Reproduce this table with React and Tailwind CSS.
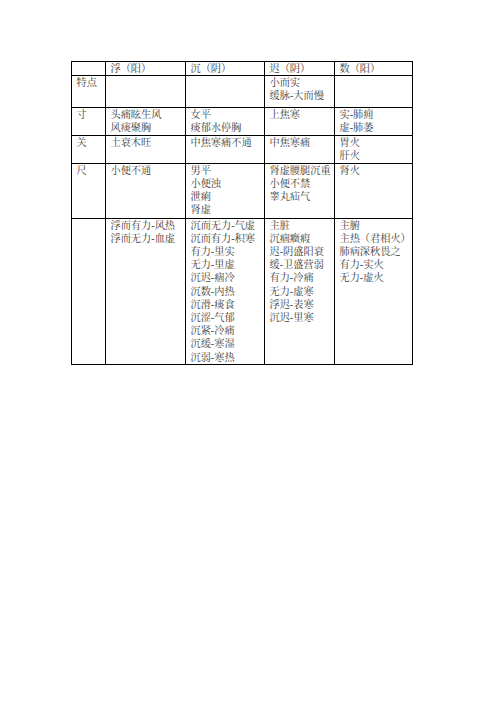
import React from "react";

const rows = [
  { h: "h-[14px]", cells: [[""], ["浮（阳）"], ["沉（阴）"], ["迟（阴）"], ["数（阳）"]] },
  { h: "h-[32px]", cells: [["特点"], [""], [""], ["小而实", "缓脉-大而慢"], [""]] },
  { h: "h-[28px]", cells: [["寸"], ["头痛眩生风", "风痰聚胸"], ["女平", "痰郁水停胸"], ["上焦寒"], ["实-肺痈", "虚-肺萎"]] },
  { h: "h-[27px]", cells: [["关"], ["土衰木旺"], ["中焦寒痛不通"], ["中焦寒痛"], ["胃火", "肝火"]] },
  { h: "h-[55px]", cells: [["尺"], ["小便不通"], ["男平", "小便浊", "泄痢", "肾虚"], ["肾虚腰腿沉重", "小便不禁", "睾丸疝气"], ["肾火"]] },
  {
    h: "h-[145px]",
    cells: [
      [""],
      ["浮而有力-风热", "浮而无力-血虚"],
      ["沉而无力-气虚", "沉而有力-积寒", "有力-里实", "无力-里虚", "沉迟-痼冷", "沉数-内热", "沉滑-痰食", "沉涩-气郁", "沉紧-冷痛", "沉缓-寒湿", "沉弱-寒热"],
      ["主脏", "沉痼癥瘕", "迟-阴盛阳衰", "缓-卫盛营弱", "有力-冷痛", "无力-虚寒", "浮迟-表寒", "沉迟-里寒"],
      ["主腑", "主热（君相火）", "肺病深秋畏之", "有力-实火", "无力-虚火"],
    ],
  },
];

const widths = ["w-[34px]", "w-[80px]", "w-[79px]", "w-[70px]", "w-[78px]"];

export default function App() {
  return (
    <div className="w-[504px] h-[713px] bg-white overflow-hidden">
      <table
        className="ml-[71px] mt-[61px] border-collapse table-fixed w-[342px] text-[#3a3a3a] text-[10.2px] leading-[13.2px]"
        style={{ fontFamily: '"Liberation Serif", "Noto Serif CJK SC", "Noto Sans CJK SC", serif' }}
      >
        <tbody>
          {rows.map((r, i) => (
            <tr key={i} className={r.h}>
              {r.cells.map((c, j) => (
                <td
                  key={j}
                  className={`${widths[j]} border border-black align-top pl-[4.5px] pr-0 py-0 whitespace-nowrap`}
                >
                  {c.map((line, k) => (
                    <div key={k}>{line || "\u00a0"}</div>
                  ))}
                </td>
              ))}
            </tr>
          ))}
        </tbody>
      </table>
    </div>
  );
}
